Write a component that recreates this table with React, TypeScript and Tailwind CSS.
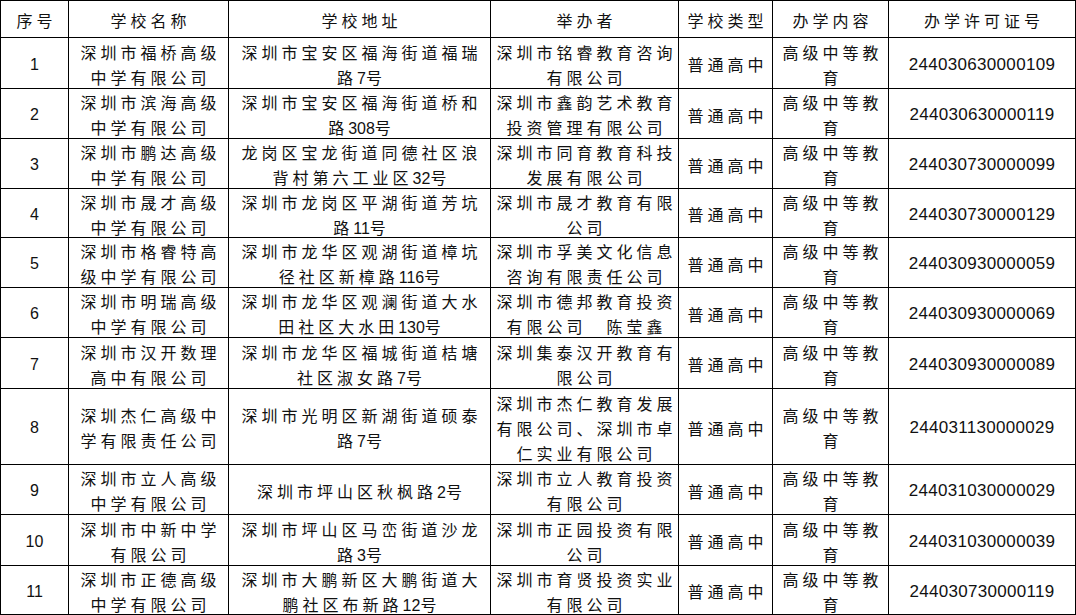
import React from "react";

type Row = {
  no: string;
  name: string[];
  addr: string[];
  org: string[];
  lic: string;
};

const rows: Row[] = [
  { no: "1", name: ["深圳市福桥高级", "中学有限公司"], addr: ["深圳市宝安区福海街道福瑞", "路7号"], org: ["深圳市铭睿教育咨询", "有限公司"], lic: "244030630000109" },
  { no: "2", name: ["深圳市滨海高级", "中学有限公司"], addr: ["深圳市宝安区福海街道桥和", "路308号"], org: ["深圳市鑫韵艺术教育", "投资管理有限公司"], lic: "244030630000119" },
  { no: "3", name: ["深圳市鹏达高级", "中学有限公司"], addr: ["龙岗区宝龙街道同德社区浪", "背村第六工业区32号"], org: ["深圳市同育教育科技", "发展有限公司"], lic: "244030730000099" },
  { no: "4", name: ["深圳市晟才高级", "中学有限公司"], addr: ["深圳市龙岗区平湖街道芳坑", "路11号"], org: ["深圳市晟才教育有限", "公司"], lic: "244030730000129" },
  { no: "5", name: ["深圳市格睿特高", "级中学有限公司"], addr: ["深圳市龙华区观湖街道樟坑", "径社区新樟路116号"], org: ["深圳市孚美文化信息", "咨询有限责任公司"], lic: "244030930000059" },
  { no: "6", name: ["深圳市明瑞高级", "中学有限公司"], addr: ["深圳市龙华区观澜街道大水", "田社区大水田130号"], org: ["深圳市德邦教育投资", "有限公司　陈莹鑫"], lic: "244030930000069" },
  { no: "7", name: ["深圳市汉开数理", "高中有限公司"], addr: ["深圳市龙华区福城街道桔塘", "社区淑女路7号"], org: ["深圳集泰汉开教育有", "限公司"], lic: "244030930000089" },
  { no: "8", name: ["深圳杰仁高级中", "学有限责任公司"], addr: ["深圳市光明区新湖街道硕泰", "路7号"], org: ["深圳市杰仁教育发展", "有限公司、深圳市卓", "仁实业有限公司"], lic: "244031130000029" },
  { no: "9", name: ["深圳市立人高级", "中学有限公司"], addr: ["深圳市坪山区秋枫路2号"], org: ["深圳市立人教育投资", "有限公司"], lic: "244031030000029" },
  { no: "10", name: ["深圳市中新中学", "有限公司"], addr: ["深圳市坪山区马峦街道沙龙", "路3号"], org: ["深圳市正园投资有限", "公司"], lic: "244031030000039" },
  { no: "11", name: ["深圳市正德高级", "中学有限公司"], addr: ["深圳市大鹏新区大鹏街道大", "鹏社区布新路12号"], org: ["深圳市育贤投资实业", "有限公司"], lic: "244030730000119" },
];

const headers = ["序号", "学校名称", "学校地址", "举办者", "学校类型", "办学内容", "办学许可证号"];

// digits inside Chinese text sit tight, only the CJK glyphs get spacing
function Line({ text }: { text: string }) {
  const parts = text.split(/([0-9]+)/).filter(Boolean);
  return (
    <div className="whitespace-nowrap pl-[4px] text-[16px] leading-[25px] tracking-[4px]">
      {parts.map((p, i) =>
        /^[0-9]+$/.test(p) ? (
          <span key={i} className="tracking-normal">
            {p}
          </span>
        ) : (
          <span key={i}>{p}</span>
        )
      )}
    </div>
  );
}

function Cjk({ lines }: { lines: string[] }) {
  return (
    <div className="flex h-full flex-col items-center justify-center bg-white pt-[5px]">
      {lines.map((l, i) => (
        <Line key={i} text={l} />
      ))}
    </div>
  );
}

function Plain({ text, size }: { text: string; size: string }) {
  return (
    <div className={`flex h-full items-center justify-center bg-white pt-[3px] ${size}`}>{text}</div>
  );
}

export default function App() {
  return (
    <div className="w-[1076px] h-[615px] bg-white font-['Liberation_Sans','Noto_Sans_CJK_SC',sans-serif] text-[#111]">
      <div className="grid grid-cols-[67px_159px_261px_187px_93px_115px_186px] grid-rows-[36px_50px_49px_49px_48px_49px_49px_50px_75px_49px_50px_48px] gap-px bg-black p-px">
        {headers.map((h) => (
          <Cjk key={h} lines={[h]} />
        ))}
        {rows.map((r) => (
          <React.Fragment key={r.no}>
            <Plain text={r.no} size="text-[16px]" />
            <Cjk lines={r.name} />
            <Cjk lines={r.addr} />
            <Cjk lines={r.org} />
            <Cjk lines={["普通高中"]} />
            <Cjk lines={["高级中等教", "育"]} />
            <Plain text={r.lic} size="text-[17px] tracking-[0.3px]" />
          </React.Fragment>
        ))}
      </div>
    </div>
  );
}
